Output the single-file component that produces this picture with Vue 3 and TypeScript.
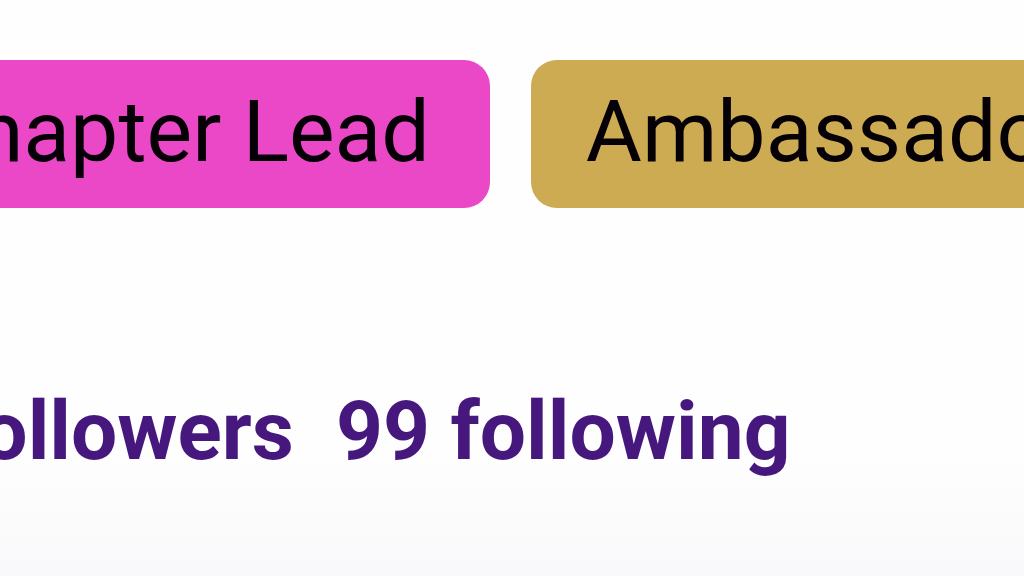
<script setup lang="ts">
interface Badge {
  label: string
  tone: string
}

const badges: Badge[] = [
  { label: 'Chapter Lead', tone: 'pink' },
  { label: 'Ambassador', tone: 'gold' },
]
</script>

<template>
  <main class="profile">
    <div class="badges">
      <span v-for="badge in badges" :key="badge.label" class="badge" :class="badge.tone">{{ badge.label }}</span>
    </div>
    <nav class="counts" aria-label="Connections">
      <a class="count" href="#followers">followers</a>
      <a class="count" href="#following">99 following</a>
    </nav>
  </main>
</template>

<style scoped>
.profile {
  box-sizing: border-box;
  min-height: 100vh;
  padding-top: 60px;
  overflow: hidden;
  font-family: Roboto, "Liberation Sans", sans-serif;
  background: linear-gradient(#fefefe 78%, #f9f9fb);
}

.badges {
  display: flex;
  gap: 41px;
  margin-left: -135px;
}

.badge {
  flex: none;
  padding: 22px 60px 26px 55px;
  border-radius: 26px;
  color: #050005;
  font-size: 86px;
  line-height: 100px;
  white-space: nowrap;
}

.pink {
  background: #eb48c7;
}

.gold {
  background: #cdab53;
}

.counts {
  display: flex;
  gap: 42px;
  margin-top: 173px;
  margin-left: -48px;
}

.count {
  flex: none;
  color: #46177d;
  font-size: 82px;
  font-weight: 700;
  line-height: 100px;
  text-decoration: none;
  white-space: nowrap;
}
</style>

<style>
body {
  margin: 0;
}
</style>
